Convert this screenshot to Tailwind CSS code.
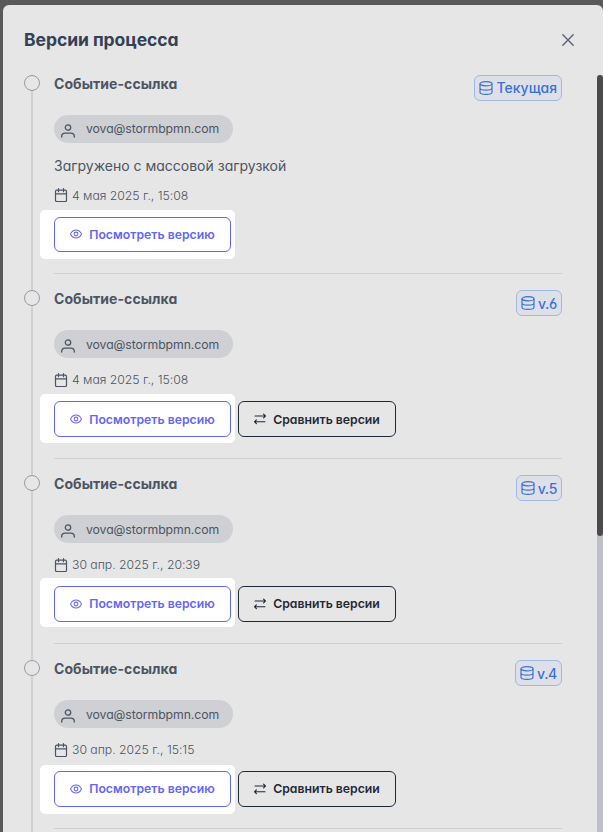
<!DOCTYPE html>
<html lang="ru">
<head>
<meta charset="utf-8">
<title>Версии процесса</title>
<script src="https://cdn.jsdelivr.net/npm/@tailwindcss/browser@4"></script>
</head>
<body class="h-[832px] overflow-hidden bg-[#595959] pl-[3px] pt-[5px] font-['Inter','Noto_Sans',sans-serif] text-[#4b5563] [font-feature-settings:'cv11','cv03']">
<svg class="hidden">
  <symbol id="user" viewBox="0 0 14 14" fill="none" stroke="currentColor" stroke-width="1.300" stroke-linecap="round"><circle cx="7" cy="3.500" r="2.700"/><path d="M.7 13v-.7c0-2 1.500-3.200 3.500-3.200h5.600c2 0 3.500 1.200 3.500 3.200v.7"/></symbol>
  <symbol id="calendar" viewBox="0 0 14 14" fill="none" stroke="currentColor" stroke-width="1.200" stroke-linecap="round"><rect x="1.500" y="2.200" width="11" height="11.300" rx="1.300"/><path d="M1.500 5.800h11M4.500.7v3M9.500.7v3"/></symbol>
  <symbol id="eye" viewBox="0 0 14 14" fill="none" stroke="currentColor" stroke-width="1.200"><path d="M.6 7C2 4 4.200 2.300 7 2.300S12 4 13.400 7C12 10 9.800 11.700 7 11.700S2 10 .6 7z"/><circle cx="7" cy="7" r="2.200"/></symbol>
  <symbol id="swap" viewBox="0 0 14 14" fill="none" stroke="currentColor" stroke-width="1.300" stroke-linecap="round" stroke-linejoin="round"><path d="M1.200 3.500h12M11.200 1.300 13.300 3.500 11.200 5.700M12.800 10.200H.8M2.800 8 .7 10.200 2.800 12.400"/></symbol>
  <symbol id="database" viewBox="0 0 14 14" fill="none" stroke="currentColor" stroke-width="1.200"><ellipse cx="7" cy="2.700" rx="6" ry="2.100"/><path d="M1 2.700v8.600c0 1.200 2.700 2.100 6 2.100s6-.9 6-2.100V2.700M1 7c0 1.200 2.700 2.100 6 2.100s6-.9 6-2.100"/></symbol>
</svg>
<main class="h-[827px] w-[600px] overflow-hidden rounded-t-md bg-[#e6e6e6]">
  <header class="flex h-[70px] items-center justify-between pl-[21px] pr-[29px]">
    <h1 class="text-[17.500px] font-bold leading-6 tracking-[-0.05px] text-[#334155]">Версии процесса</h1>
    <svg class="size-3" viewBox="0 0 12 12" fill="none" stroke="#5f6875" stroke-width="1.500" stroke-linecap="round"><path d="M.8.8l10.400 10.400M11.200.8.8 11.200"/></svg>
  </header>
  <div class="flex h-[757px] justify-between">
    <div class="w-[559px] pl-[21px]">

      <section class="flex h-[215px]">
        <div class="flex w-4 flex-col items-center"><i class="size-4 shrink-0 rounded-full border border-[#959ba5]"></i><i class="w-0.5 grow bg-[#cfd0d4]"></i></div>
        <div class="ml-3.5 flex h-[199px] w-[508px] flex-col border-b border-[#cfd0d4]">
          <div class="flex h-10 items-start justify-between">
            <h2 class="text-[14px] font-bold leading-[18px] tracking-[0.06px]">Событие-ссылка</h2>
            <span class="flex h-[26px] items-center gap-1 rounded-md border border-[#9db9e8] bg-[#dde0e6] px-1 text-[14px] font-medium leading-5 text-[#3b70dc]"><svg class="size-3.5"><use href="#database"/></svg>Текущая</span>
          </div>
          <div class="flex h-7 w-[179px] shrink-0 items-center rounded-full bg-[#cfd0d4] pl-[7px]"><svg class="mt-[3px] size-3.5"><use href="#user"/></svg><span class="ml-[11px] text-[12.250px] leading-4 tracking-[-0.08px]">vova@stormbpmn.com</span></div>
          <p class="mt-[13px] text-[14px] leading-5">Загружено с массовой загрузкой</p>
          <div class="mt-[11px] flex h-4 items-center gap-1"><svg class="size-3.5"><use href="#calendar"/></svg><span class="pt-[2px] text-[12.250px] font-light leading-4 tracking-[-0.03px]">4 мая 2025 г., 15:08</span></div>
          <div class="mt-[7px] -ml-3.5 flex h-[49px] w-[195px] items-center rounded-[5px] bg-white pl-3.5">
            <button class="flex h-[35px] w-[177px] items-center justify-center gap-[7px] rounded-md border border-[#6366f1] text-[12.250px] font-semibold text-[#6366f1]"><svg class="mb-[2px] size-3"><use href="#eye"/></svg><span class="pt-[2px]">Посмотреть версию</span></button>
          </div>
        </div>
      </section>

      <section class="flex h-[185px]">
        <div class="flex w-4 flex-col items-center"><i class="size-4 shrink-0 rounded-full border border-[#959ba5]"></i><i class="w-0.5 grow bg-[#cfd0d4]"></i></div>
        <div class="ml-3.5 flex h-[169px] w-[508px] flex-col border-b border-[#cfd0d4]">
          <div class="flex h-10 items-start justify-between">
            <h2 class="text-[14px] font-bold leading-[18px] tracking-[0.06px]">Событие-ссылка</h2>
            <span class="flex h-[26px] items-center gap-[3px] rounded-md border border-[#9db9e8] bg-[#dde0e6] px-1 text-[14px] font-medium leading-5 text-[#3b70dc]"><svg class="size-3.5"><use href="#database"/></svg><span class="pt-[2px] tracking-[-0.3px]">v.6</span></span>
          </div>
          <div class="flex h-7 w-[179px] shrink-0 items-center rounded-full bg-[#cfd0d4] pl-[7px]"><svg class="mt-[3px] size-3.5"><use href="#user"/></svg><span class="ml-[11px] pt-[2px] text-[12.250px] leading-4 tracking-[-0.08px]">vova@stormbpmn.com</span></div>
          <div class="mt-3.5 flex h-4 items-center gap-1"><svg class="size-3.5"><use href="#calendar"/></svg><span class="text-[12.250px] font-light leading-4 tracking-[-0.03px]">4 мая 2025 г., 15:08</span></div>
          <div class="mt-[6px] -ml-3.5 flex items-center gap-[3px]">
            <div class="flex h-[49px] w-[195px] items-center rounded-[5px] bg-white pl-3.5 pt-[1px]">
              <button class="flex h-9 w-[177px] items-center justify-center gap-[7px] rounded-md border border-[#6366f1] text-[12.250px] font-semibold text-[#6366f1]"><svg class="size-3"><use href="#eye"/></svg><span class="pt-[2px]">Посмотреть версию</span></button>
            </div>
            <button class="mt-[1px] flex h-9 w-[158px] items-center justify-center gap-[7px] rounded-md border border-[#1f2937] text-[12.250px] font-semibold text-[#1f2937]"><svg class="size-3"><use href="#swap"/></svg><span class="pt-[2px]">Сравнить версии</span></button>
          </div>
        </div>
      </section>

      <section class="flex h-[185px]">
        <div class="flex w-4 flex-col items-center"><i class="size-4 shrink-0 rounded-full border border-[#959ba5]"></i><i class="w-0.5 grow bg-[#cfd0d4]"></i></div>
        <div class="ml-3.5 flex h-[169px] w-[508px] flex-col border-b border-[#cfd0d4]">
          <div class="flex h-10 items-start justify-between">
            <h2 class="text-[14px] font-bold leading-[18px] tracking-[0.06px]">Событие-ссылка</h2>
            <span class="flex h-[26px] items-center gap-[3px] rounded-md border border-[#9db9e8] bg-[#dde0e6] px-1 text-[14px] font-medium leading-5 text-[#3b70dc]"><svg class="size-3.5"><use href="#database"/></svg><span class="pt-[2px] tracking-[-0.3px]">v.5</span></span>
          </div>
          <div class="flex h-7 w-[179px] shrink-0 items-center rounded-full bg-[#cfd0d4] pl-[7px]"><svg class="mt-[3px] size-3.5"><use href="#user"/></svg><span class="ml-[11px] pt-[2px] text-[12.250px] leading-4 tracking-[-0.08px]">vova@stormbpmn.com</span></div>
          <div class="mt-3.5 flex h-4 items-center gap-1"><svg class="size-3.5"><use href="#calendar"/></svg><span class="text-[12.250px] font-light leading-4 tracking-[-0.03px]">30 апр. 2025 г., 20:39</span></div>
          <div class="mt-[5px] -ml-3.5 flex items-center gap-[3px]">
            <div class="flex h-[49px] w-[195px] items-center rounded-[5px] bg-white pl-3.5 pt-[3px]">
              <button class="flex h-9 w-[177px] items-center justify-center gap-[7px] rounded-md border border-[#6366f1] text-[12.250px] font-semibold text-[#6366f1]"><svg class="size-3"><use href="#eye"/></svg>Посмотреть версию</button>
            </div>
            <button class="mt-[3px] flex h-9 w-[158px] items-center justify-center gap-[7px] rounded-md border border-[#1f2937] text-[12.250px] font-semibold text-[#1f2937]"><svg class="size-3"><use href="#swap"/></svg>Сравнить версии</button>
          </div>
        </div>
      </section>

      <section class="flex h-[185px]">
        <div class="flex w-4 flex-col items-center"><i class="size-4 shrink-0 rounded-full border border-[#959ba5]"></i><i class="w-0.5 grow bg-[#cfd0d4]"></i></div>
        <div class="ml-3.5 flex h-[169px] w-[508px] flex-col border-b border-[#cfd0d4]">
          <div class="flex h-10 items-start justify-between">
            <h2 class="text-[14px] font-bold leading-[18px] tracking-[0.06px]">Событие-ссылка</h2>
            <span class="flex h-[26px] items-center gap-[3px] rounded-md border border-[#9db9e8] bg-[#dde0e6] px-1 text-[14px] font-medium leading-5 text-[#3b70dc]"><svg class="size-3.5"><use href="#database"/></svg><span class="pt-[2px] tracking-[-0.3px]">v.4</span></span>
          </div>
          <div class="flex h-7 w-[179px] shrink-0 items-center rounded-full bg-[#cfd0d4] pl-[7px]"><svg class="mt-[3px] size-3.5"><use href="#user"/></svg><span class="ml-[11px] pt-[2px] text-[12.250px] leading-4 tracking-[-0.08px]">vova@stormbpmn.com</span></div>
          <div class="mt-3.5 flex h-4 items-center gap-1"><svg class="size-3.5"><use href="#calendar"/></svg><span class="text-[12.250px] font-light leading-4 tracking-[-0.03px]">30 апр. 2025 г., 15:15</span></div>
          <div class="mt-[7px] -ml-3.5 flex items-center gap-[3px]">
            <div class="flex h-[49px] w-[195px] items-center rounded-[5px] bg-white pb-[1px] pl-3.5">
              <button class="flex h-9 w-[177px] items-center justify-center gap-[7px] rounded-md border border-[#6366f1] text-[12.250px] font-semibold text-[#6366f1]"><svg class="size-3"><use href="#eye"/></svg>Посмотреть версию</button>
            </div>
            <button class="mb-[1px] flex h-9 w-[158px] items-center justify-center gap-[7px] rounded-md border border-[#1f2937] text-[12.250px] font-semibold text-[#1f2937]"><svg class="size-3"><use href="#swap"/></svg>Сравнить версии</button>
          </div>
        </div>
      </section>
    </div>
    <div class="w-1.5 rounded-t-sm bg-[#bcc0c8]"><div class="h-[461px] rounded-[3px] bg-[#4b4b4b]"></div></div>
  </div>
</main>
</body>
</html>
